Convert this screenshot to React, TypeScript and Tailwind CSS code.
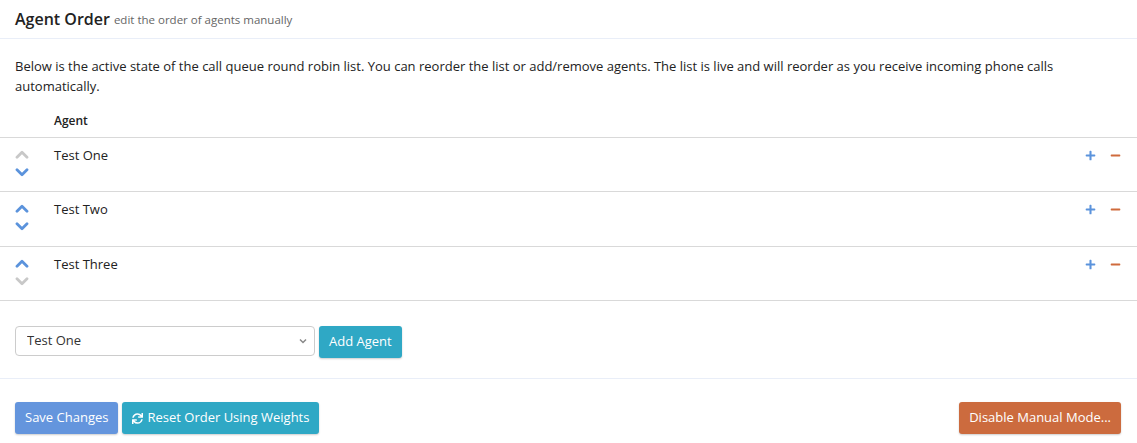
import React, { useState } from 'react';
import { FaPlus, FaMinus, FaSync } from 'react-icons/fa';

const agentsInitial = ['Test One', 'Test Two', 'Test Three'];

const Chevron = ({ up }: { up?: boolean }) => (
  <svg className="w-[14px] h-[9px]" viewBox="0 0 14 9" fill="none" stroke="currentColor" strokeWidth="2.8" strokeLinecap="round" strokeLinejoin="round">
    <path d={up ? 'M2 7.2L7 2.2l5 5' : 'M2 1.8l5 5 5-5'} />
  </svg>
);

export default function App() {
  const [agents, setAgents] = useState<string[]>(agentsInitial);
  const [pick, setPick] = useState('Test One');

  const move = (i: number, dir: number) => {
    const j = i + dir;
    if (j < 0 || j >= agents.length) return;
    const next = [...agents];
    [next[i], next[j]] = [next[j], next[i]];
    setAgents(next);
  };

  return (
    <div className="w-[1137px] h-[443px] bg-white text-[#333] font-['Open_Sans',sans-serif] text-[13px]">
      {/* HEADER */}
      <div className="h-[39px] px-[15px] flex items-center border-b border-[#e9eef8]">
        <h3 className="text-[16px] font-semibold text-[#222] leading-none">Agent Order</h3>
        <span className="ml-1 text-[11.5px] text-[#666] leading-none pt-[2px]">edit the order of agents manually</span>
      </div>

      {/* BODY */}
      <div className="pt-[17px]">
        <p className="px-[15px] leading-[20px] text-[#222]">
          Below is the active state of the call queue round robin list. You can reorder the list or add/remove agents. The list is live and will reorder as you receive incoming phone calls automatically.
        </p>

        <div className="mt-[13px] h-[28px] pl-[54px] pt-[3px] text-[12px] font-semibold text-[#222]">Agent</div>

        <div className="border-t border-[#d9d9d9]">
          {agents.map((a, i) => (
            <div key={a} className={`${i === 1 ? 'h-[55px]' : 'h-[54px]'} border-b border-[#d9d9d9] flex px-[15px] pt-[7px]`}>
              <div className="w-[39px] flex flex-col pt-[5px]">
                <button onClick={() => move(i, -1)} className={`h-[18px] flex items-start ${i === 0 ? 'text-[#c8c8c8]' : 'text-[#5b93dc]'}`}>
                  <Chevron up />
                </button>
                <button onClick={() => move(i, 1)} className={`h-[18px] flex items-start ${i === agents.length - 1 ? 'text-[#c8c8c8]' : 'text-[#5b93dc]'}`}>
                  <Chevron />
                </button>
              </div>
              <div className="flex-1 leading-[20px] text-[#222]">{a}</div>
              <div className="flex gap-[14px] h-[20px] items-center pr-[1px]">
                <button className="text-[#5b93dc]"><FaPlus className="w-[11px] h-[11px]" /></button>
                <button onClick={() => setAgents(agents.filter(x => x !== a))} className="text-[#cf6b3c]"><FaMinus className="w-[11px] h-[11px]" /></button>
              </div>
            </div>
          ))}
        </div>

        {/* ADD AGENT */}
        <div className="px-[15px] pt-[25px] pb-[20px] flex items-start gap-[4px] border-b border-[#e9eef8]">
          <div className="relative">
            <select
              value={pick}
              onChange={e => setPick(e.target.value)}
              className="appearance-none w-[300px] h-[30px] border border-[#ccc] rounded-[4px] pl-[11px] pr-6 text-[13px] text-[#333] bg-white"
            >
              {agentsInitial.map(a => <option key={a}>{a}</option>)}
            </select>
            <svg className="absolute right-[8px] top-[12px] w-[8px] h-[6px] text-[#888]" viewBox="0 0 8 6" fill="none" stroke="currentColor" strokeWidth="1.5">
              <path d="M1 1.5l3 3 3-3" />
            </svg>
          </div>
          <button className="h-[32px] px-[10px] rounded-[3px] bg-[#2fa8c5] text-white text-[13px] shadow-[0_1px_2px_rgba(0,0,0,0.2)]">Add Agent</button>
        </div>

        {/* FOOTER */}
        <div className="px-[15px] pt-[23px] flex items-center">
          <button className="h-[32px] px-[10px] rounded-[3px] bg-[#6495dd] text-white text-[13px] shadow-[0_1px_2px_rgba(0,0,0,0.2)]">Save Changes</button>
          <button className="ml-[4px] h-[32px] px-[10px] rounded-[3px] bg-[#2fa8c5] text-white text-[13px] flex items-center gap-[4px] shadow-[0_1px_2px_rgba(0,0,0,0.2)]">
            <FaSync className="w-[11px] h-[11px]" />
            Reset Order Using Weights
          </button>
          <button className="ml-auto mr-[1px] h-[32px] px-[10px] rounded-[3px] bg-[#cc6b3e] text-white text-[13px] shadow-[0_1px_2px_rgba(0,0,0,0.2)]">Disable Manual Mode...</button>
        </div>
      </div>
    </div>
  );
}
